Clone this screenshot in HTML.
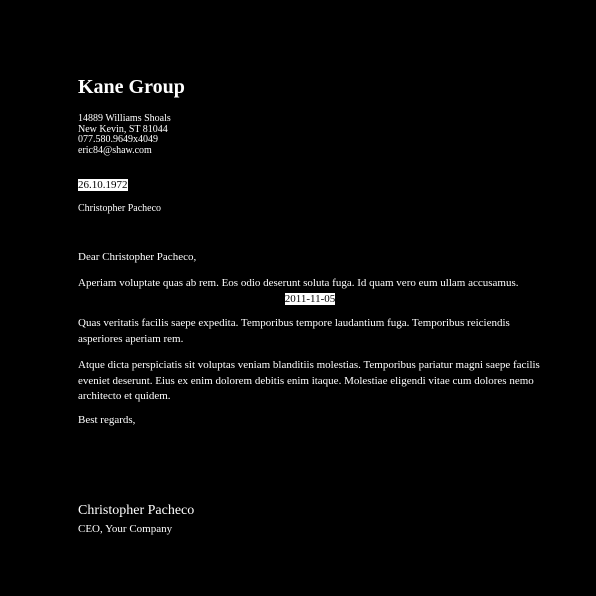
<!DOCTYPE html>
<html><head><style>
body{margin:0;background:#000;width:596px;height:596px;overflow:hidden;font-family:"Liberation Serif",serif;color:#fff}
.a{position:absolute;left:78px;white-space:nowrap}
.p{position:absolute;left:78px;width:464px;font-size:11px;line-height:15.5px}
.hl{background:#fff;color:#000}
</style></head><body>
<div class="a" style="top:76px;font-size:20px;font-weight:bold">Kane Group</div>
<div class="a" style="top:114px;font-size:10px;line-height:10.5px">14889 Williams Shoals<br>New Kevin, ST 81044<br>077.580.9649x4049<br>eric84@shaw.com</div>
<div class="a" style="top:179px;font-size:11px;line-height:13px"><span class="hl">26.10.1972</span></div>
<div class="a" style="top:203px;font-size:10px">Christopher Pacheco</div>
<div class="p" style="top:250px">Dear Christopher Pacheco,</div>
<div class="p" style="top:276px">Aperiam voluptate quas ab rem. Eos odio deserunt soluta fuga. Id quam vero eum ullam accusamus.<div style="text-align:center"><span class="hl">2011-11-05</span></div></div>
<div class="p" style="top:316px">Quas veritatis facilis saepe expedita. Temporibus tempore laudantium fuga. Temporibus reiciendis asperiores aperiam rem.</div>
<div class="p" style="top:358px">Atque dicta perspiciatis sit voluptas veniam blanditiis molestias. Temporibus pariatur magni saepe facilis eveniet deserunt. Eius ex enim dolorem debitis enim itaque. Molestiae eligendi vitae cum dolores nemo architecto et quidem.</div>
<div class="p" style="top:413px">Best regards,</div>
<div class="a" style="top:503px;font-size:14px">Christopher Pacheco</div>
<div class="a" style="top:523px;font-size:11px">CEO, Your Company</div>
</body></html>
